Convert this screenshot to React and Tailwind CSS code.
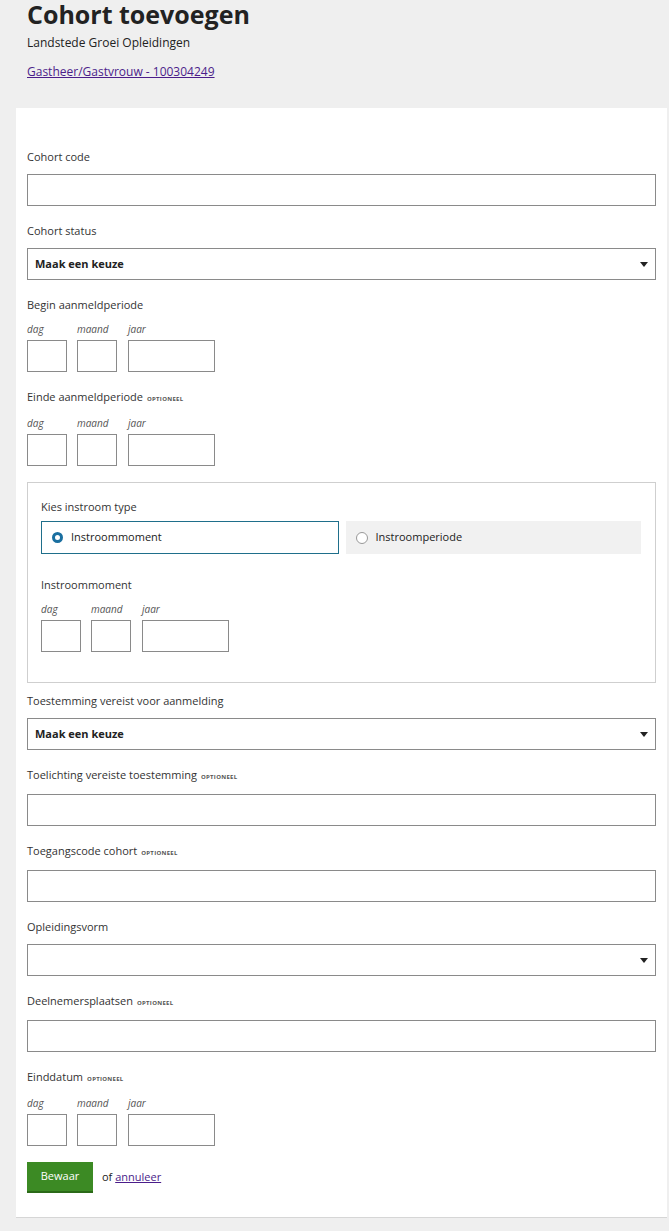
import React from 'react'

const Label = ({ children, opt }) => (
  <div className="text-[11px] leading-[14px] mb-[10px] text-[#333]">
    {children}
    {opt && <span className="ml-1 text-[6px] font-bold tracking-wider text-[#555] uppercase">optioneel</span>}
  </div>
)

const Input = () => <div className="h-8 border border-[#8a8a8a] bg-white" />

const Select = ({ text }) => (
  <div className="h-8 border border-[#8a8a8a] bg-white flex items-center justify-between px-[7px]">
    <span className="text-[11px] font-bold text-[#222]">{text}</span>
    <svg width="8" height="5" viewBox="0 0 8 5"><path d="M0 0h8L4 5z" fill="#222" /></svg>
  </div>
)

const DateField = () => (
  <div className="mt-1 flex gap-[10px] italic text-[10px] text-[#555]">
    <div className="w-10"><div className="leading-[14px] mb-1">dag</div><div className="h-8 border border-[#8a8a8a]" /></div>
    <div className="w-10"><div className="leading-[14px] mb-1">maand</div><div className="h-8 border border-[#8a8a8a]" /></div>
    <div className="w-[87px] ml-px"><div className="leading-[14px] mb-1">jaar</div><div className="h-8 border border-[#8a8a8a]" /></div>
  </div>
)

export default function App() {
  return (
    <div className="min-h-[1231px] bg-[#efefef] pb-[9px]" style={{ fontFamily: '"Open Sans", "Noto Sans", sans-serif' }}>
      <div className="px-[27px]">
        <h1 className="text-[25px] font-bold leading-[28px] text-[#222]">Cohort toevoegen</h1>
        <div className="text-[12px] leading-[16px] mt-[7px] text-[#222]">Landstede Groei Opleidingen</div>
        <a href="#" className="block text-[12px] leading-[16px] mt-[13px] text-[#4b1d8a] underline">Gastheer/Gastvrouw - 100304249</a>
      </div>
      <div className="mt-[28px] ml-4 mr-[2px] bg-white px-[11px] pt-[42px] pb-[24px] border-b border-[#d6d6d6]">
        <Label>Cohort code</Label>
        <Input />
        <div className="mt-[18px]"><Label>Cohort status</Label><Select text="Maak een keuze" /></div>
        <div className="mt-[18px]"><Label>Begin aanmeldperiode</Label><DateField /></div>
        <div className="mt-[18px]"><Label opt>Einde aanmeldperiode</Label><DateField /></div>
        <div className="mt-4 border border-[#cfcfcf] px-[13px] pt-[17px] pb-[30px]">
          <Label>Kies instroom type</Label>
          <div className="-mt-[3px] flex gap-[7px] mr-px">
            <div className="flex-1 h-[33px] border border-[#1f6f8b] flex items-center px-[10px] gap-[8px] text-[11px] text-[#222]">
              <span className="w-[11px] h-[11px] rounded-full border-[3px] border-[#1a6fa0] bg-white" />Instroommoment
            </div>
            <div className="flex-1 h-[33px] bg-[#f1f1f1] flex items-center px-[10px] gap-[8px] text-[11px] text-[#222]">
              <span className="w-[12px] h-[12px] rounded-full border border-[#999] bg-white" />Instroomperiode
            </div>
          </div>
          <div className="mt-[24px]"><Label>Instroommoment</Label><DateField /></div>
        </div>
        <div className="mt-[11px]"><Label>Toestemming vereist voor aanmelding</Label><Select text="Maak een keuze" /></div>
        <div className="mt-[18px]"><Label opt>Toelichting vereiste toestemming</Label><Input /></div>
        <div className="mt-[18px]"><Label opt>Toegangscode cohort</Label><Input /></div>
        <div className="mt-[18px]"><Label>Opleidingsvorm</Label><Select text="" /></div>
        <div className="mt-[18px]"><Label opt>Deelnemersplaatsen</Label><Input /></div>
        <div className="mt-[18px]"><Label opt>Einddatum</Label><DateField /></div>
        <div className="mt-4 flex items-center gap-[9px]">
          <button className="w-[66px] h-[31px] bg-[#3c8a24] border-b-2 border-[#2b6a18] text-white text-[11px]">Bewaar</button>
          <span className="text-[11px] text-[#222]">of <a href="#" className="text-[#4b1d8a] underline">annuleer</a></span>
        </div>
      </div>
    </div>
  )
}
